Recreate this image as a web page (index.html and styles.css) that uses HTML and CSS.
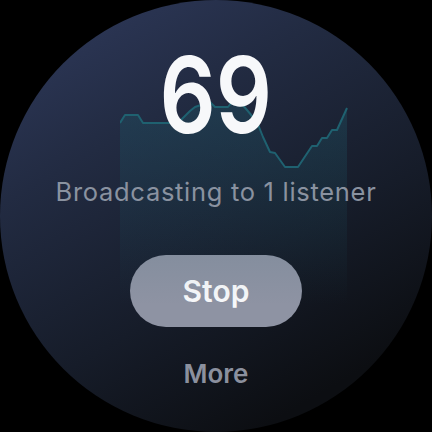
FILE: index.html
```html
<!DOCTYPE html>
<html>
<head>
<meta charset="utf-8">
<link rel="stylesheet" href="styles.css">
</head>
<body>
<div class="watch">
  <svg class="chart" viewBox="120 95 228 210" width="228" height="210">
    <defs>
      <linearGradient id="fillg" x1="0" y1="0" x2="0" y2="1">
        <stop offset="0" stop-color="#1f5a6a" stop-opacity="0.35"/>
        <stop offset="1" stop-color="#1f5a6a" stop-opacity="0"/>
      </linearGradient>
    </defs>
    <polygon fill="url(#fillg)" points="120,123 125,115 138,115 143,123 178,123 182,119 186,115 190,111 195,107 210,102 215,107 228,107 232,102 240,102 247,110 257,122 263,137 270,152 275,153 285,167 298,167 312,146 317,146 322,138 327,138 332,130 337,130 347,108 347,305 120,305"/>
    <polyline fill="none" stroke="#1f6170" stroke-width="2" stroke-linejoin="round" points="120,123 125,115 138,115 143,123 178,123 182,119 186,115 190,111 195,107 210,102 215,107 228,107 232,102 240,102 247,110 257,122 263,137 270,152 275,153 285,167 298,167 312,146 317,146 322,138 327,138 332,130 337,130 347,108"/>
  </svg>
  <div class="value">69</div>
  <div class="status">Broadcasting to 1 listener</div>
  <div class="stop">Stop</div>
  <div class="more">More</div>
</div>
</body>
</html>
```
FILE: styles.css
```css
html, body {
  margin: 0;
  padding: 0;
  background: #000;
}
.watch {
  position: relative;
  width: 432px;
  height: 432px;
  border-radius: 50%;
  overflow: hidden;
  background: linear-gradient(150deg, #303b5e 0%, #222b42 30%, #161c29 60%, #0c0e12 85%);
  display: flex;
  flex-direction: column;
  align-items: center;
  font-family: Inter, "Noto Sans", sans-serif;
}
.chart {
  position: absolute;
  left: 120px;
  top: 95px;
}
.value {
  position: relative;
  margin-top: 42px;
  font-size: 106px;
  line-height: 1;
  font-weight: 600;
  color: #f7f8fa;
  transform: scaleX(0.83);
}
.status {
  position: relative;
  margin-top: 31px;
  font-size: 25.5px;
  letter-spacing: 0.7px;
  line-height: 1;
  color: #8a92a0;
}
.stop {
  margin-top: 50px;
  width: 172px;
  height: 72px;
  border-radius: 36px;
  background: #8e93a3;
  color: #f7f8fa;
  font-size: 30px;
  font-weight: 600;
  display: flex;
  align-items: center;
  justify-content: center;
}
.more {
  margin-top: 34px;
  font-size: 26px;
  line-height: 1;
  font-weight: 600;
  color: #8b909e;
}
```
